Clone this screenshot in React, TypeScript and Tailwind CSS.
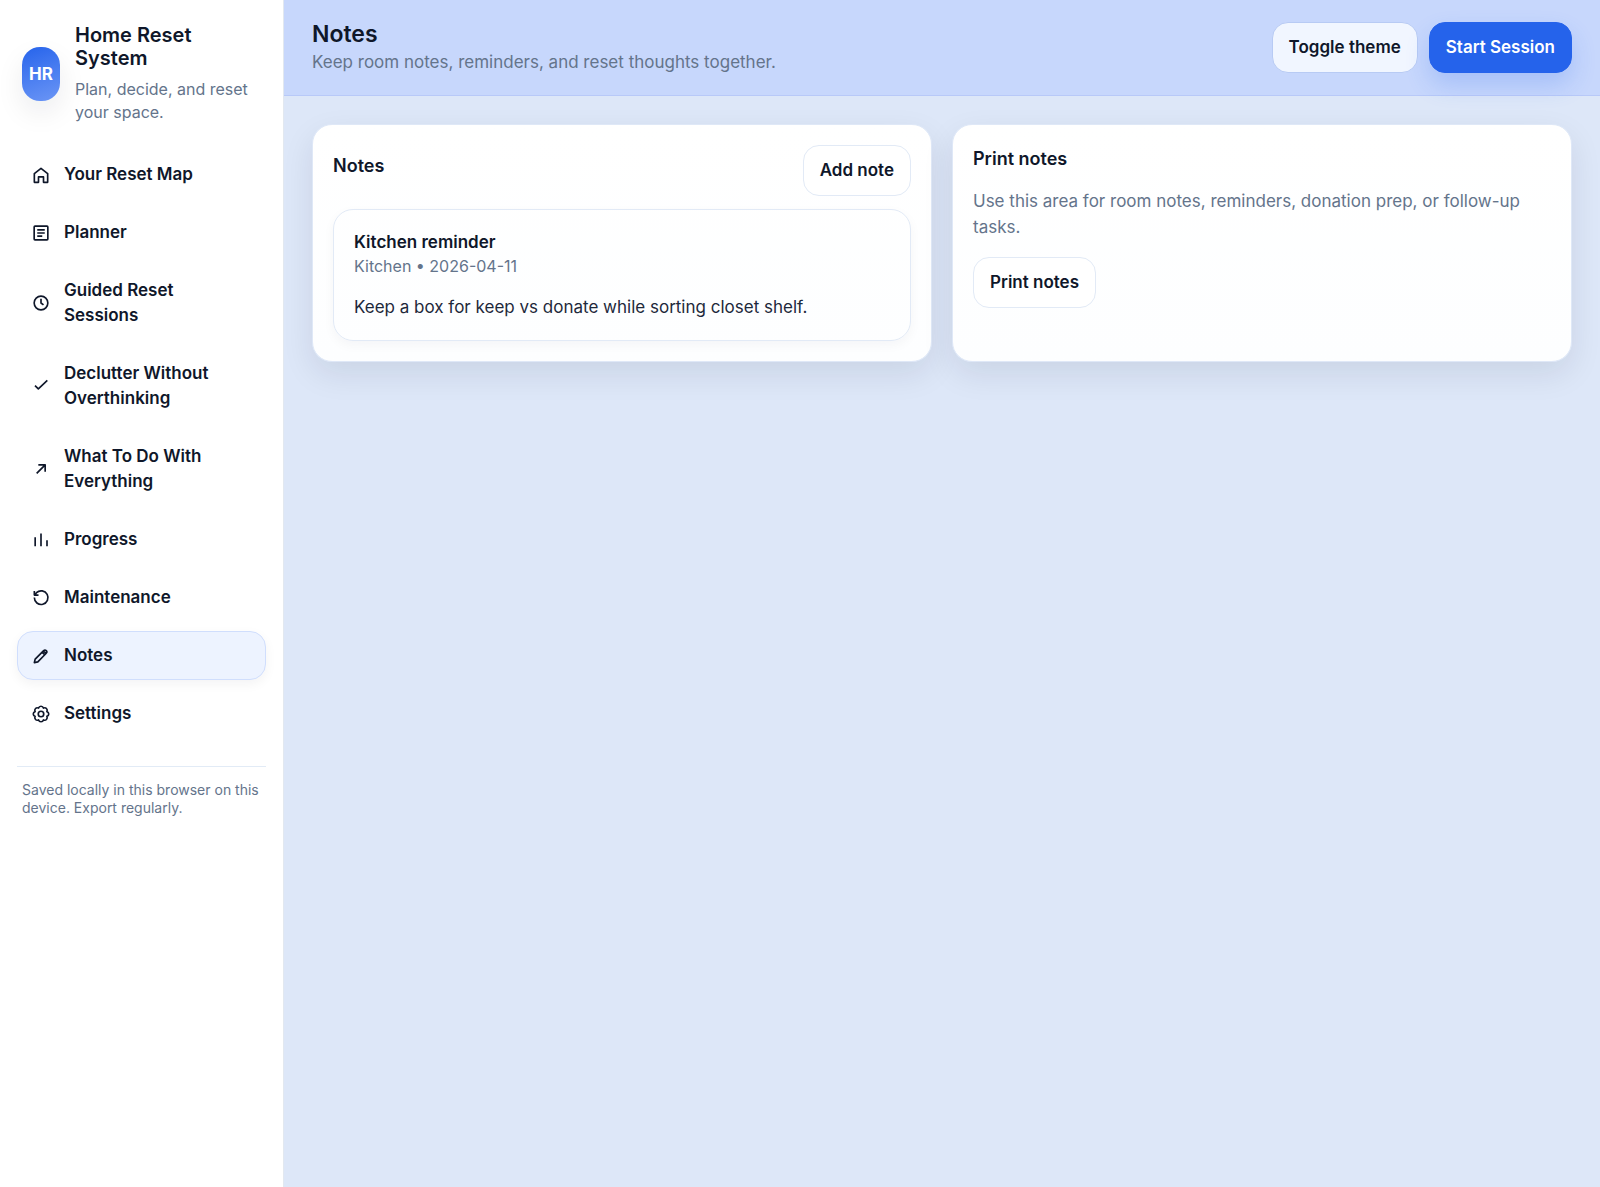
import { ReactNode, useState } from "react";
import clsx from "clsx";

type NavItem = {
  label: string;
  icon: ReactNode;
};

type Note = {
  id: number;
  title: string;
  room: string;
  date: string;
  body: string;
};

const navItems: NavItem[] = [
  {
    label: "Your Reset Map",
    icon: <path d="M4 10.3 12 4l8 6.3v10.5h-5v-6.5H9v6.5H4z" />,
  },
  {
    label: "Planner",
    icon: (
      <>
        <rect x="3.8" y="3.8" width="16.4" height="16.4" rx="1" />
        <path d="M7.5 8.3h9M7.5 12h9M7.5 15.7h6" />
      </>
    ),
  },
  {
    label: "Guided Reset Sessions",
    icon: (
      <>
        <circle cx="12" cy="12" r="8.2" />
        <path d="M12 7v5l3 2.3" />
      </>
    ),
  },
  {
    label: "Declutter Without Overthinking",
    icon: <path d="m4.8 11.5 4 4L19.6 5.3" />,
  },
  {
    label: "What To Do With Everything",
    icon: <path d="M6.8 17.2 17 7M8.8 7H17v8.2" />,
  },
  {
    label: "Progress",
    icon: <path d="M5 19.5V8.7M12 19.5V4.2M19.2 19.5v-7.2" />,
  },
  {
    label: "Maintenance",
    icon: <path d="M4 3.5v5h5M4 11.5a8.2 8.2 0 1 0 2.6-5.9L4.3 8.5" />,
  },
  {
    label: "Notes",
    icon: (
      <path d="m4 20 1-4.2L15.2 5.6a1.9 1.9 0 0 1 3.1 3.1L8.2 19zM13.4 7.4l3.2 3.2M15 6l3 3" />
    ),
  },
  {
    label: "Settings",
    icon: (
      <>
        <circle cx="12" cy="12" r="3.3" />
        <path d="M19.02 14.91a3 3 0 0 1-4.11 4.11 3 3 0 0 1-5.82 0 3 3 0 0 1-4.11-4.11 3 3 0 0 1 0-5.82 3 3 0 0 1 4.11-4.11 3 3 0 0 1 5.82 0 3 3 0 0 1 4.11 4.11 3 3 0 0 1 0 5.82z" />
      </>
    ),
  },
];

const notes: Note[] = [
  {
    id: 1,
    title: "Kitchen reminder",
    room: "Kitchen",
    date: "2026-04-11",
    body: "Keep a box for keep vs donate while sorting closet shelf.",
  },
];

const Button = ({
  children,
  className,
  onClick,
}: {
  children: ReactNode;
  className: string;
  onClick?: () => void;
}) => (
  <button
    type="button"
    onClick={onClick}
    className={clsx(
      "shrink-0 rounded-2xl border px-4 py-3 leading-[25px] font-semibold",
      className
    )}
  >
    {children}
  </button>
);

const Card = ({ children }: { children: ReactNode }) => (
  <section className="rounded-[20px] border border-[#dfe8f7] bg-linear-to-b from-white to-[#fdfeff] p-5 shadow-[0_12px_32px_rgba(15,23,42,0.09)]">
    {children}
  </section>
);

const Sidebar = ({
  active,
  onSelect,
}: {
  active: string;
  onSelect: (label: string) => void;
}) => (
  <aside className="w-[284px] shrink-0 border-r border-[#e2e8f0] bg-white px-[17px] py-6">
    <div className="flex items-center gap-[15px] px-[5px]">
      <div className="flex h-[54px] w-[38px] shrink-0 items-center justify-center rounded-[18px] bg-linear-160 from-[#2563eb] to-[#6b95f5] font-bold text-white shadow-[0_12px_28px_rgba(15,23,42,0.08)]">
        HR
      </div>
      <div>
        <h1 className="text-[20px] leading-[23px] font-semibold">
          Home Reset System
        </h1>
        <p className="mt-2 text-[16px] leading-[23px] text-[#64748b]">
          Plan, decide, and reset your space.
        </p>
      </div>
    </div>

    <nav className="mt-[26px] flex flex-col gap-[9px]">
      {navItems.map(({ label, icon }) => (
        <a
          key={label}
          href="#"
          onClick={(e) => {
            e.preventDefault();
            onSelect(label);
          }}
          className={clsx(
            "flex items-center gap-[13px] rounded-2xl border px-[13px] py-[11px] leading-[25px] font-semibold",
            active === label
              ? "border-[#d0defd] bg-[#edf3ff] shadow-[0_4px_12px_rgba(15,23,42,0.05)]"
              : "border-transparent"
          )}
        >
          <svg
            viewBox="0 0 24 24"
            className="size-5 shrink-0"
            fill="none"
            stroke="currentColor"
            strokeWidth="2"
            strokeLinejoin="round"
            aria-hidden="true"
          >
            {icon}
          </svg>
          {label}
        </a>
      ))}
    </nav>

    <p className="mt-7 border-t border-[#e2ebf6] px-[5px] pt-3.5 text-[14px] leading-[18px] text-[#64748b]">
      Saved locally in this browser on this device. Export regularly.
    </p>
  </aside>
);

const App = () => {
  const [active, setActive] = useState("Notes");

  return (
    <div className="flex min-h-screen bg-[#dde7f8] font-['Inter',sans-serif] text-[17px] leading-[25px] text-[#0f172a]">
      <Sidebar active={active} onSelect={setActive} />

      <div className="min-w-0 flex-1">
        <header className="flex items-center justify-between border-b border-[#b8c9f8] bg-[#c7d7fc] px-7 py-[21px]">
          <div>
            <h2 className="text-[23px] leading-[26px] font-semibold">Notes</h2>
            <p className="mt-[3px] text-[17px] leading-6 text-[#64748b]">
              Keep room notes, reminders, and reset thoughts together.
            </p>
          </div>
          <div className="flex gap-[11px]">
            <Button className="border-[#b8cbf4] bg-[#f1f6ff]">
              Toggle theme
            </Button>
            <Button className="border-[#2563eb] bg-[#2563eb] text-white shadow-[0_12px_24px_rgba(37,99,235,0.20)]">
              Start Session
            </Button>
          </div>
        </header>

        <main className="grid grid-cols-2 gap-5 p-7">
          <Card>
            <div className="flex items-center justify-between">
              <h3 className="mb-2.5 text-[18px] leading-[27px] font-semibold">
                Notes
              </h3>
              <Button className="border-[#e2eaf6] bg-white">Add note</Button>
            </div>
            {notes.map((note) => (
              <article
                key={note.id}
                className="mt-[13px] rounded-[20px] border border-[#e2eaf6] p-5 shadow-[0_4px_12px_rgba(15,23,42,0.04)]"
              >
                <h4 className="font-semibold">{note.title}</h4>
                <div className="text-[16px] leading-[23px] text-[#64748b]">
                  {note.room} • {note.date}
                </div>
                <p className="mt-[17px] text-[#1e293b]">{note.body}</p>
              </article>
            ))}
          </Card>

          <Card>
            <h3 className="text-[18px] leading-[27px] font-semibold">
              Print notes
            </h3>
            <p className="mt-4 mb-[17px] leading-[26px] text-[#64748b]">
              Use this area for room notes, reminders, donation prep, or
              follow-up tasks.
            </p>
            <Button
              className="border-[#e2eaf6] bg-white"
              onClick={() => window.print()}
            >
              Print notes
            </Button>
          </Card>
        </main>
      </div>
    </div>
  );
};

export default App;
